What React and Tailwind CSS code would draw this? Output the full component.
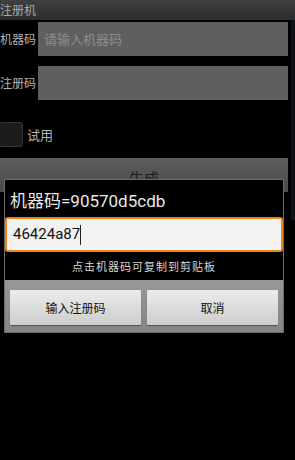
import React from 'react';

const cjk = { fontFamily: '"Noto Sans CJK SC", "Noto Sans", sans-serif' };
const mixed = { fontFamily: 'Roboto, "Noto Sans CJK SC", sans-serif' };

const Row = ({ label, placeholder, className }) => (
  <div className={`flex items-center ${className}`}>
    <span className="w-[38px] text-[12px] text-[#b4b4b4] shrink-0">{label}</span>
    <div className="flex-1 h-[34px] bg-[#5f5f5f] flex items-center px-[6px] text-[13px] text-[#8c8c8c]">
      {placeholder}
    </div>
  </div>
);

export default function App() {
  return (
    <div className="relative w-[295px] h-[460px] bg-black overflow-hidden" style={cjk}>
      {/* background screen (dimmed) */}
      <div className="flex flex-col pr-[7px]">
        <div className="h-[20px] bg-gradient-to-b from-[#404040] to-[#2c2c2c] flex items-center text-[12px] text-[#a8a8a8] w-[295px]">
          注册机
        </div>
        <div className="h-[2px] bg-black" />
        <Row label="机器码" placeholder="请输入机器码" />
        <Row label="注册码" placeholder="" className="mt-[10px]" />
        <div className="flex items-center mt-[22px] gap-[4px]">
          <div className="w-[24px] h-[25px] -ml-[1px] rounded-[3px] bg-[#1c1c1c] border border-[#353535]" />
          <span className="text-[13px] text-[#b4b4b4]">试用</span>
        </div>
        <div className="mt-[11px] h-[34px] bg-gradient-to-b from-[#5c5c5c] to-[#4a4a4a] flex justify-center pt-[9px] text-[15px] text-[#1e1e1e]">
          生成
        </div>
      </div>
      <div className="absolute right-0 top-[20px] w-[4px] h-[200px] bg-[#0c1418]" />

      {/* dialog */}
      <div className="absolute left-[4px] top-[179px] w-[280px] border border-[#6a6a6a] bg-black">
        <div className="h-[100px] flex flex-col">
          <div className="h-[37px] flex items-center pt-[6px] px-[5px] text-[17px] text-[#e8e8e8]" style={mixed}>
            机器码=90570d5cdb
          </div>
          <div className="h-[35px] rounded-[3px] border-2 border-[#e8861c] bg-[#f2f2f2] flex items-center px-[6px] text-[15px] text-[#111]" style={mixed}>
            46424a87
            <span className="w-px h-[20px] bg-[#222]" />
          </div>
          <div className="flex-1 flex items-center justify-center text-[11px] text-[#d8d8d8] tracking-[1px]">
            点击机器码可复制到剪贴板
          </div>
        </div>
        <div className="h-[52px] bg-gradient-to-b from-[#979797] to-[#858585] flex gap-[6px] px-[5px] pt-[10px]">
          <div className="flex-1 h-[35px] bg-gradient-to-b from-[#ececec] to-[#cdcdcd] rounded-[1px] shadow-[0_1px_1px_rgba(0,0,0,0.4)] flex items-center justify-center text-[12px] text-[#111]">
            输入注册码
          </div>
          <div className="flex-1 h-[35px] bg-gradient-to-b from-[#ececec] to-[#cdcdcd] rounded-[1px] shadow-[0_1px_1px_rgba(0,0,0,0.4)] flex items-center justify-center text-[12px] text-[#111]">
            取消
          </div>
        </div>
      </div>
    </div>
  );
}
